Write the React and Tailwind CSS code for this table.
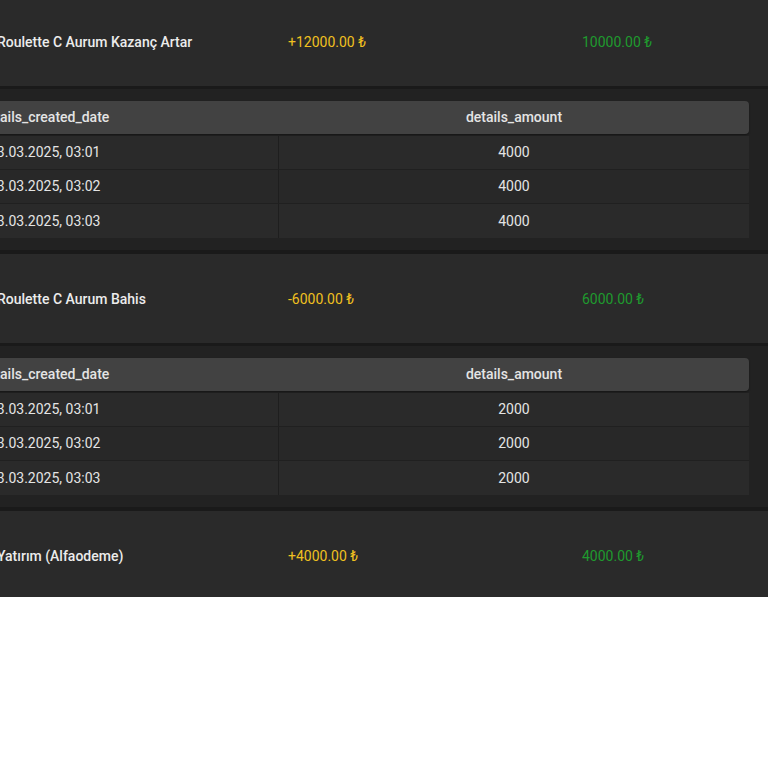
import React from 'react';

const items = [
  { title: 'Roulette C Aurum Kazanç Artar', amount: '+12000.00 ₺', balance: '10000.00 ₺', details: ['4000', '4000', '4000'] },
  { title: 'Roulette C Aurum Bahis', amount: '-6000.00 ₺', balance: '6000.00 ₺', details: ['2000', '2000', '2000'] },
  { title: 'Yatırım (Alfaodeme)', amount: '+4000.00 ₺', balance: '4000.00 ₺', details: null },
];

const dates = ['13.03.2025, 03:01', '13.03.2025, 03:02', '13.03.2025, 03:03'];

function Row({ item, last }) {
  return (
    <div className={`${last ? 'h-[86px] pt-[5px]' : 'h-[89px] pt-[2px]'} flex items-center bg-[#2a2a2a] text-[14px]`}>
      <div className="w-[302px] pl-[11px] font-medium text-[#ececec] whitespace-nowrap">
        <span className="inline-block">{item.title}</span>
      </div>
      <div className="w-[294px] text-[14px] text-[#f0c020]">{item.amount}</div>
      <div className="text-[14px] text-[#1f9a2e]">{item.balance}</div>
    </div>
  );
}

function Details({ values }) {
  return (
    <div className="bg-[#222222] pt-3 pb-3 border-t-[3px] border-b-4 border-[#1a1a1a]">
      <div className="mr-[19px] text-[14px] text-[#e4e4e4]">
        <div className="h-[33px] flex items-center bg-[#424242] rounded-r-[4px] font-medium shadow-[0_1px_2px_rgba(0,0,0,0.4)]">
          <div className="w-[293px] whitespace-nowrap">
            <span className="inline-block -ml-[6px]">details_created_date</span>
          </div>
          <div className="flex-1 text-center">details_amount</div>
        </div>
        <div className="mt-[2px]">
          {values.map((v, i) => (
            <div key={i} className={`h-[34px] flex items-center border-b border-[#202020] last:border-b-0 ${i % 2 === 0 ? 'bg-[#2a2a2a]' : 'bg-[#282828]'}`}>
              <div className="w-[293px] h-full flex items-center border-r border-[#1e1e1e] whitespace-nowrap">
                <span className="inline-block ml-[3px]">{dates[i]}</span>
              </div>
              <div className="flex-1 text-center">{v}</div>
            </div>
          ))}
        </div>
      </div>
    </div>
  );
}

export default function App() {
  return (
    <div className="w-[768px] overflow-hidden bg-white" style={{ fontFamily: 'Roboto, "Noto Sans", sans-serif' }}>
      <div className="-mt-[3px] -ml-[14px]">
        {items.map((item, i) => (
          <div key={i}>
            <Row item={item} last={i === items.length - 1} />
            {item.details && <Details values={item.details} />}
          </div>
        ))}
      </div>
    </div>
  );
}
